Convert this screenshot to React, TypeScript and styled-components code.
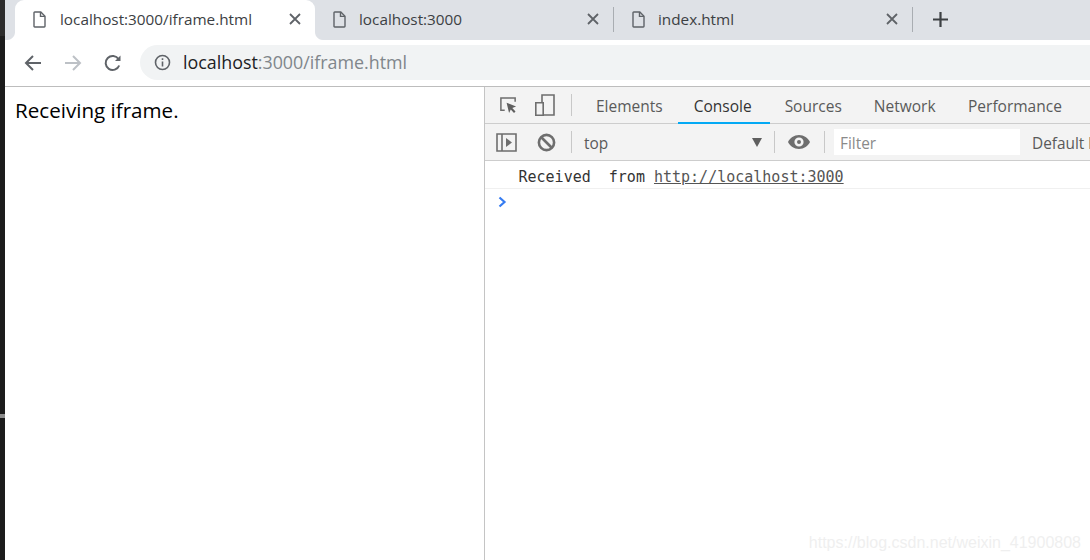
import React from "react";
import styled, { createGlobalStyle } from "styled-components";

const GlobalStyle = createGlobalStyle`
  html, body {
    margin: 0;
    padding: 0;
    width: 1090px;
    height: 560px;
    overflow: hidden;
    background: #fff;
    font-family: "Open Sans", "Noto Sans", sans-serif;
  }
`;

const Page = styled.div`
  display: flex;
  width: 1090px;
  height: 560px;
  overflow: hidden;
`;

const Edge = styled.div`
  width: 5px;
  flex: none;
  display: flex;
  flex-direction: column;
  background: #1c1c1c;
`;

const EdgeTop = styled.div`
  height: 36px;
  background: #2c2c2c;
`;

const EdgeMark = styled.div`
  height: 4px;
  margin-top: 378px;
  background: #8c8c8c;
`;

const Browser = styled.div`
  flex: 1;
  min-width: 0;
  display: flex;
  flex-direction: column;
`;

const TabStrip = styled.div`
  height: 40px;
  flex: none;
  display: flex;
  background: #dee1e6;
`;

const Tab = styled.div<{ $active?: boolean; $width: number }>`
  position: relative;
  width: ${(p) => p.$width}px;
  flex: none;
  display: flex;
  align-items: center;
  padding: 0 0 2px 18px;
  box-sizing: border-box;
  background: ${(p) => (p.$active ? "#fff" : "transparent")};
  border-radius: ${(p) => (p.$active ? "9px 9px 0 0" : "0")};

  ${(p) =>
    p.$active &&
    `
    &::before, &::after {
      content: "";
      position: absolute;
      bottom: 0;
      width: 8px;
      height: 8px;
    }
    &::before {
      left: -8px;
      background: radial-gradient(circle at 0 0, #dee1e6 7.5px, #fff 8.5px);
    }
    &::after {
      right: -8px;
      background: radial-gradient(circle at 100% 0, #dee1e6 7.5px, #fff 8.5px);
    }
  `}
`;

const TabGap = styled.div<{ $width: number }>`
  width: ${(p) => p.$width}px;
  flex: none;
`;

const TabTitle = styled.span<{ $gap: number }>`
  margin-left: ${(p) => p.$gap}px;
  font-size: 15.3px;
  color: #3c4043;
  white-space: nowrap;
`;

const TabClose = styled.svg`
  position: absolute;
  right: 13px;
  top: 12px;
`;

const TabDivider = styled.div`
  width: 1px;
  height: 25px;
  margin-top: 7px;
  flex: none;
  background: #a9adb2;
`;

const NewTab = styled.svg`
  margin: 11px 0 0 19px;
  flex: none;
`;

const NavBar = styled.div`
  height: 45px;
  padding-bottom: 1px;
  flex: none;
  display: flex;
  align-items: center;
  background: #fff;
  border-bottom: 1px solid #bdbdbd;
`;

const NavIcon = styled.svg<{ $left: number }>`
  flex: none;
  margin-left: ${(p) => p.$left}px;
`;

const Omnibox = styled.div`
  flex: 1;
  height: 35px;
  margin-left: 17px;
  padding-left: 14px;
  display: flex;
  align-items: center;
  background: #f1f3f4;
  border-radius: 18px 0 0 18px;
`;

const UrlText = styled.span`
  margin: 0 0 2px 12px;
  font-size: 17.85px;
  color: #202124;
  white-space: nowrap;
`;

const UrlMuted = styled.span`
  color: #80868b;
`;

const Content = styled.div`
  flex: 1;
  min-height: 0;
  display: flex;
`;

const Viewport = styled.div`
  width: 479px;
  flex: none;
  padding: 9px 0 0 10px;
  box-sizing: border-box;
  font-size: 20.6px;
  line-height: 28px;
  color: #000;
`;

const DevTools = styled.div`
  flex: 1;
  min-width: 0;
  position: relative;
  border-left: 1px solid #c4c4c4;
  background: #fff;
  overflow: hidden;
`;

const PanelTabs = styled.div`
  height: 36px;
  display: flex;
  background: #f3f3f3;
  border-bottom: 1px solid #cdcdcd;
`;

const ToolIcon = styled.svg<{ $left: number }>`
  flex: none;
  align-self: center;
  margin-left: ${(p) => p.$left}px;
`;

const BarDivider = styled.div<{ $left: number }>`
  width: 1px;
  height: 22px;
  flex: none;
  align-self: center;
  margin-left: ${(p) => p.$left}px;
  background: #c8c8c8;
`;

const PanelTab = styled.div<{ $active?: boolean; $left: number }>`
  margin-left: ${(p) => p.$left}px;
  padding: 3px ${(p) => (p.$active ? 18 : 16)}px 0 16px;
  flex: none;
  display: flex;
  align-items: center;
  font-size: 15.5px;
  color: ${(p) => (p.$active ? "#333" : "#5a5a5a")};
  border-bottom: 2px solid ${(p) => (p.$active ? "#03a9f4" : "transparent")};
  margin-bottom: -1px;
  white-space: nowrap;
`;

const ConsoleBar = styled.div`
  height: 36px;
  display: flex;
  align-items: center;
  background: #f3f3f3;
  border-bottom: 1px solid #cdcdcd;
  white-space: nowrap;
`;

const ContextName = styled.span`
  width: 168px;
  margin-left: 12px;
  padding-top: 2px;
  flex: none;
  font-size: 15.4px;
  color: #5a5a5a;
`;

const Caret = styled.svg`
  flex: none;
`;

const FilterBox = styled.div`
  width: 186px;
  height: 26px;
  margin-left: 9px;
  padding: 2px 0 0 6px;
  box-sizing: border-box;
  flex: none;
  display: flex;
  align-items: center;
  background: #fff;
  font-size: 15.4px;
  color: #8a8a8a;
`;

const LevelsLabel = styled.span`
  margin-left: 12px;
  padding-top: 2px;
  font-size: 15.4px;
  color: #5a5a5a;
`;

const LogRow = styled.div`
  height: 28px;
  display: flex;
  align-items: center;
  padding: 5px 0 0 33.500px;
  box-sizing: border-box;
  border-bottom: 1px solid #f0f0f0;
  font-family: "DejaVu Sans Mono", monospace;
  font-size: 15px;
  color: #333;
  white-space: pre;
`;

const LogLink = styled.span`
  color: #555;
  text-decoration: underline;
`;

const PromptRow = styled.div`
  height: 26px;
  display: flex;
  align-items: center;
  padding-left: 13px;
`;

const Watermark = styled.span`
  position: absolute;
  right: 9px;
  bottom: 8px;
  font-family: "Liberation Sans", sans-serif;
  font-size: 16px;
  color: #efefef;
  white-space: nowrap;
`;

const FileIcon = () => (
  <svg width="13" height="17" viewBox="0 0 13 17" fill="none" stroke="#5f6368" strokeWidth="1.4">
    <path d="M1.7 1h6.1l4.200 4.200v10.100a.7.7 0 0 1-.7.7H1.700a.7.7 0 0 1-.7-.7V1.700a.7.7 0 0 1 .7-.7z" />
    <path d="M7.500 1v4.400h4.500" />
  </svg>
);

const CloseIcon = () => (
  <TabClose width="14" height="14" viewBox="0 0 14 14" stroke="#5f6368" strokeWidth="1.8">
    <path d="M2 2l10 10M12 2L2 12" />
  </TabClose>
);

const App = () => {
  return (
    <Page>
      <GlobalStyle />
      <Edge>
        <EdgeTop />
        <EdgeMark />
      </Edge>
      <Browser>
        <TabStrip>
          <TabGap $width={10} />
          <Tab $active $width={300}>
            <FileIcon />
            <TabTitle $gap={14}>localhost:3000/iframe.html</TabTitle>
            <CloseIcon />
          </Tab>
          <Tab $width={298}>
            <FileIcon />
            <TabTitle $gap={13}>localhost:3000</TabTitle>
            <CloseIcon />
          </Tab>
          <TabDivider />
          <Tab $width={298}>
            <FileIcon />
            <TabTitle $gap={13}>index.html</TabTitle>
            <CloseIcon />
          </Tab>
          <TabDivider />
          <NewTab width="17" height="17" viewBox="0 0 17 17" stroke="#3c4043" strokeWidth="2.2">
            <path d="M8.5 1v15M1 8.5h15" />
          </NewTab>
        </TabStrip>
        <NavBar>
          <NavIcon $left={18} width="20" height="20" viewBox="0 0 20 20" fill="none" stroke="#5f6368" strokeWidth="2">
            <path d="M18 10H3M10 3l-7 7 7 7" />
          </NavIcon>
          <NavIcon $left={20} width="20" height="20" viewBox="0 0 20 20" fill="none" stroke="#bdc1c6" strokeWidth="2">
            <path d="M2 10h15M10 3l7 7-7 7" />
          </NavIcon>
          <NavIcon $left={20} width="20" height="20" viewBox="0 0 20 20" fill="none" stroke="#5f6368" strokeWidth="2">
            <path d="M16.2 12.5a7 7 0 1 1-.6-6.2" />
            <path d="M17.500 2.500v5.500H12" fill="#5f6368" stroke="none" />
          </NavIcon>
          <Omnibox>
            <svg width="17" height="17" viewBox="0 0 17 17" fill="none" stroke="#5f6368" strokeWidth="1.6">
              <circle cx="8.5" cy="8.5" r="7" />
              <path d="M8.500 7.500v5M8.500 4.200v1.800" />
            </svg>
            <UrlText>
              localhost<UrlMuted>:3000/iframe.html</UrlMuted>
            </UrlText>
          </Omnibox>
        </NavBar>
        <Content>
          <Viewport>Receiving iframe.</Viewport>
          <DevTools>
            <PanelTabs>
              <ToolIcon $left={14} width="19" height="19" viewBox="0 0 20 20" fill="none">
                <path d="M6 15H2V2h15v4" stroke="#6e6e6e" strokeWidth="1.6" />
                <path d="M8 7l10 4-4 1.600 3.400 3.600-1.600 1.600-3.400-3.600L10.600 18z" fill="#5f5f5f" />
              </ToolIcon>
              <ToolIcon $left={16} width="22" height="22" viewBox="0 0 22 22" fill="none" stroke="#6e6e6e" strokeWidth="1.6">
                <path d="M8 8V1h12v20H9" />
                <path d="M1.800 8.800h7.400v12.400H1.800z" />
              </ToolIcon>
              <BarDivider $left={15} />
              <PanelTab $left={8}>Elements</PanelTab>
              <PanelTab $left={-1} $active>Console</PanelTab>
              <PanelTab $left={-1}>Sources</PanelTab>
              <PanelTab $left={0}>Network</PanelTab>
              <PanelTab $left={0.500}>Performance</PanelTab>
            </PanelTabs>
            <ConsoleBar>
              <ToolIcon $left={11} width="21" height="19" viewBox="0 0 21 19" fill="none">
                <path d="M1 1h19v17H1zM6 1v17" stroke="#6e6e6e" strokeWidth="1.6" />
                <path d="M10 5l6 4.500-6 4.500z" fill="#6e6e6e" />
              </ToolIcon>
              <ToolIcon $left={20} width="19" height="19" viewBox="0 0 19 19" fill="none" stroke="#6e6e6e" strokeWidth="2.6">
                <circle cx="9.500" cy="9.500" r="7.600" />
                <path d="M4 4l11 11" />
              </ToolIcon>
              <BarDivider $left={15} />
              <ContextName>top</ContextName>
              <Caret width="10" height="9" viewBox="0 0 10 9" fill="#5f5f5f">
                <path d="M0 0h10L5 9z" />
              </Caret>
              <BarDivider $left={12} />
              <ToolIcon $left={13} width="22" height="14" viewBox="0 0 22 14">
                <path fillRule="evenodd" fill="#6e6e6e" d="M11 0c5 0 9 3 11 7-2 4-6 7-11 7S2 11 0 7c2-4 6-7 11-7zm0 2.400a4.600 4.600 0 1 0 0 9.200 4.600 4.600 0 0 0 0-9.200zM11 5a2 2 0 1 1 0 4 2 2 0 0 1 0-4z" />
              </ToolIcon>
              <BarDivider $left={14} />
              <FilterBox>Filter</FilterBox>
              <LevelsLabel>Default levels</LevelsLabel>
            </ConsoleBar>
            <LogRow>
              Received  from <LogLink>http://localhost:3000</LogLink>
            </LogRow>
            <PromptRow>
              <svg width="9" height="12" viewBox="0 0 9 12" fill="none" stroke="#367cf1" strokeWidth="2.2">
                <path d="M1.500 1.500L6.500 6l-5 4.500" />
              </svg>
            </PromptRow>
            <Watermark>https://blog.csdn.net/weixin_41900808</Watermark>
          </DevTools>
        </Content>
      </Browser>
    </Page>
  );
};

export default App;
